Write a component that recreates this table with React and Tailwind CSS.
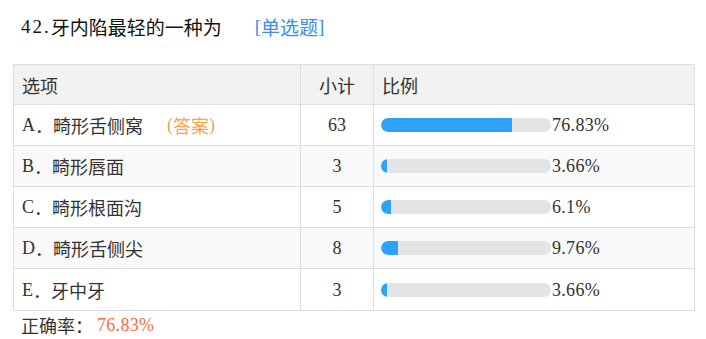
const rows = [
	{ key: "A", label: "畸形舌侧窝", count: 63, pct: 76.83, answer: true },
	{ key: "B", label: "畸形唇面", count: 3, pct: 3.66 },
	{ key: "C", label: "畸形根面沟", count: 5, pct: 6.1 },
	{ key: "D", label: "畸形舌侧尖", count: 8, pct: 9.76 },
	{ key: "E", label: "牙中牙", count: 3, pct: 3.66 },
];

// latin glyphs in a serif face, half an em wide for digits like the source font
const L = ({ children, className = "" }) => (
	<span className={`font-['Liberation_Serif',serif] ${className}`}>{children}</span>
);

const Bar = ({ pct }) => (
	<div className="flex items-center">
		<div className="w-[170px] h-[14px] rounded-full bg-[#e3e4e6] overflow-hidden">
			<div className="h-full bg-[#2ea2f6] rounded-l-full" style={{ width: `${pct}%` }} />
		</div>
		<L className="ml-[1px] tracking-[0.3px]">{pct}%</L>
	</div>
);

export default function App() {
	return (
		<div className="w-[706px] h-[339px] bg-white text-[#222] text-[18px] leading-[24px] font-['Noto_Sans_CJK_SC',sans-serif]">
			{/* Title */}
			<div className="h-[39px] pt-[15px] pl-[21px] flex items-center text-[19px] text-[#111]">
				<L className="tracking-[2px]">42.</L>
				<span>牙内陷最轻的一种为</span>
				<span className="ml-[33px] h-[24px] flex items-center text-[#3a8cf2]">
					<L>[</L>
					<span>单选题</span>
					<L>]</L>
				</span>
			</div>

			{/* Table */}
			<div className="mt-[25px] ml-[13px] w-[682px] border border-[#dedede] text-[#333]">
				<div className="flex h-[40px] bg-[#f2f2f2] border-b border-[#dedede]">
					<div className="w-[287px] border-r border-[#dedede] pl-[8px] flex items-center">选项</div>
					<div className="w-[73px] border-r border-[#dedede] flex items-center justify-center">小计</div>
					<div className="flex-1 pl-[8px] flex items-center">比例</div>
				</div>
				{rows.map((r, i) => (
					<div
						key={r.key}
						className={`flex h-[41px] ${i < rows.length - 1 ? "border-b border-[#dedede]" : "h-[40px]"} ${
							i % 2 === 1 ? "bg-[#f9f9f9]" : "bg-white"
						}`}
					>
						<div className="w-[287px] border-r border-[#dedede] pl-[8px] flex items-center">
							<L>{r.key}</L>
							<span>．</span>
							<span>{r.label}</span>
							{r.answer && (
								<span className="ml-[24px] flex items-center text-[#f5a54e]">
									<L>(</L>
									<span>答案</span>
									<L>)</L>
								</span>
							)}
						</div>
						<div className="w-[73px] border-r border-[#dedede] flex items-center justify-center">
							<L>{r.count}</L>
						</div>
						<div className="flex-1 pl-[7px] flex items-center">
							<Bar pct={r.pct} />
						</div>
					</div>
				))}
			</div>

			{/* Footer */}
			<div className="h-[26px] pt-[2px] pl-[21px] flex items-center text-[#333]">
				<span>正确率：</span>
				<L className="ml-[4px] text-[#ff6a3a] tracking-[0.3px]">76.83%</L>
			</div>
		</div>
	);
}
